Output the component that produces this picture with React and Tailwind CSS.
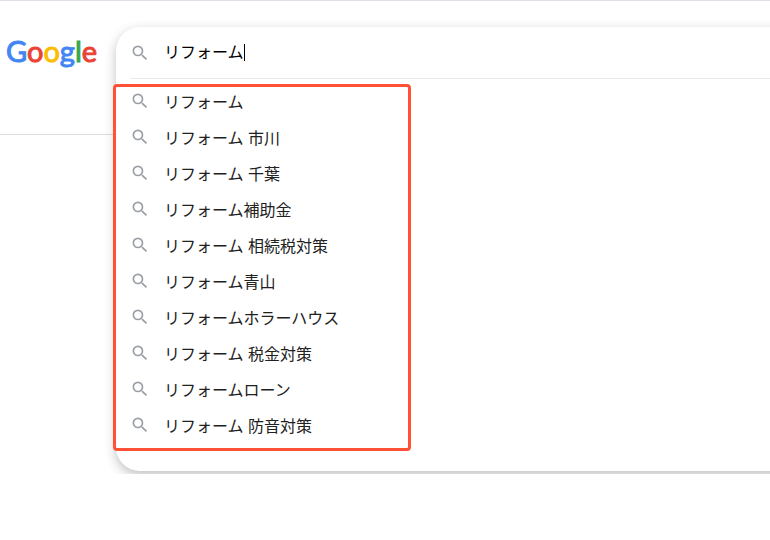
import { useState } from 'react'

const suggestions = [
  'リフォーム',
  'リフォーム 市川',
  'リフォーム 千葉',
  'リフォーム補助金',
  'リフォーム 相続税対策',
  'リフォーム青山',
  'リフォームホラーハウス',
  'リフォーム 税金対策',
  'リフォームローン',
  'リフォーム 防音対策',
]

function SearchIcon() {
  return (
    <svg viewBox="0 0 24 24" className="size-5 shrink-0 fill-[#9aa0a6]" aria-hidden="true">
      <path d="M15.5 14h-.79l-.28-.27A6.471 6.471 0 0 0 16 9.5 6.5 6.5 0 1 0 9.5 16c1.61 0 3.09-.59 4.23-1.57l.27.28v.79l5 4.99L20.49 19l-4.99-5zm-6 0C7.01 14 5 11.99 5 9.5S7.01 5 9.5 5 14 7.01 14 9.5 11.99 14 9.5 14z" />
    </svg>
  )
}

function Logo() {
  return (
    <a href="#" className="font-['Lato',sans-serif] text-[29px] leading-8 font-normal [-webkit-text-stroke:1px]">
      <span className="text-[#4285f4]">G</span>
      <span className="text-[#ea4335]">o</span>
      <span className="text-[#fbbc05]">o</span>
      <span className="text-[#4285f4]">g</span>
      <span className="text-[#34a853]">l</span>
      <span className="text-[#ea4335]">e</span>
    </a>
  )
}

export default function App() {
  const [query, setQuery] = useState('リフォーム')

  return (
    <div className="min-h-screen overflow-x-clip bg-white font-['Liberation_Sans','Noto_Sans_CJK_JP',sans-serif] text-base text-[#212121]">
      {/* Header, the open search box hangs below it */}
      <header className="flex h-[135px] items-start border-t border-b border-t-[#dfdfe8] border-b-[#dadce0]">
        <div className="w-[116px] shrink-0 pt-[34px] pl-[6px]">
          <Logo />
        </div>

        <form
          onSubmit={e => e.preventDefault()}
          className="z-10 mt-[26px] -mr-6 min-w-0 flex-1 rounded-l-3xl bg-white pb-7 shadow-[0_4px_12px_rgba(0,0,0,0.25)] [clip-path:inset(-12px_0_-3px_-12px)]"
        >
          <label className="ml-[14px] flex h-[52px] items-center border-b border-[#e8eaed]">
            <SearchIcon />
            <input
              type="text"
              aria-label="検索"
              value={query}
              onChange={e => setQuery(e.target.value)}
              className="ml-[14px] field-sizing-content text-black caret-transparent outline-none"
            />
            <span className="h-[17px] w-px bg-black" />
          </label>

          {/* Suggestions */}
          <div className="relative mt-1">
            <ul>
              {suggestions.map(s => (
                <li key={s}>
                  <button
                    type="button"
                    onClick={() => setQuery(s)}
                    className="flex h-9 w-full items-center pl-[14px] text-left"
                  >
                    <SearchIcon />
                    <span className="ml-[14px] pt-[3px]">{s}</span>
                  </button>
                </li>
              ))}
            </ul>
            {/* Highlight frame */}
            <div className="pointer-events-none absolute top-px -bottom-2 -left-[3px] w-[298px] rounded border-3 border-[#ff5136]" />
          </div>
        </form>
      </header>
    </div>
  )
}
